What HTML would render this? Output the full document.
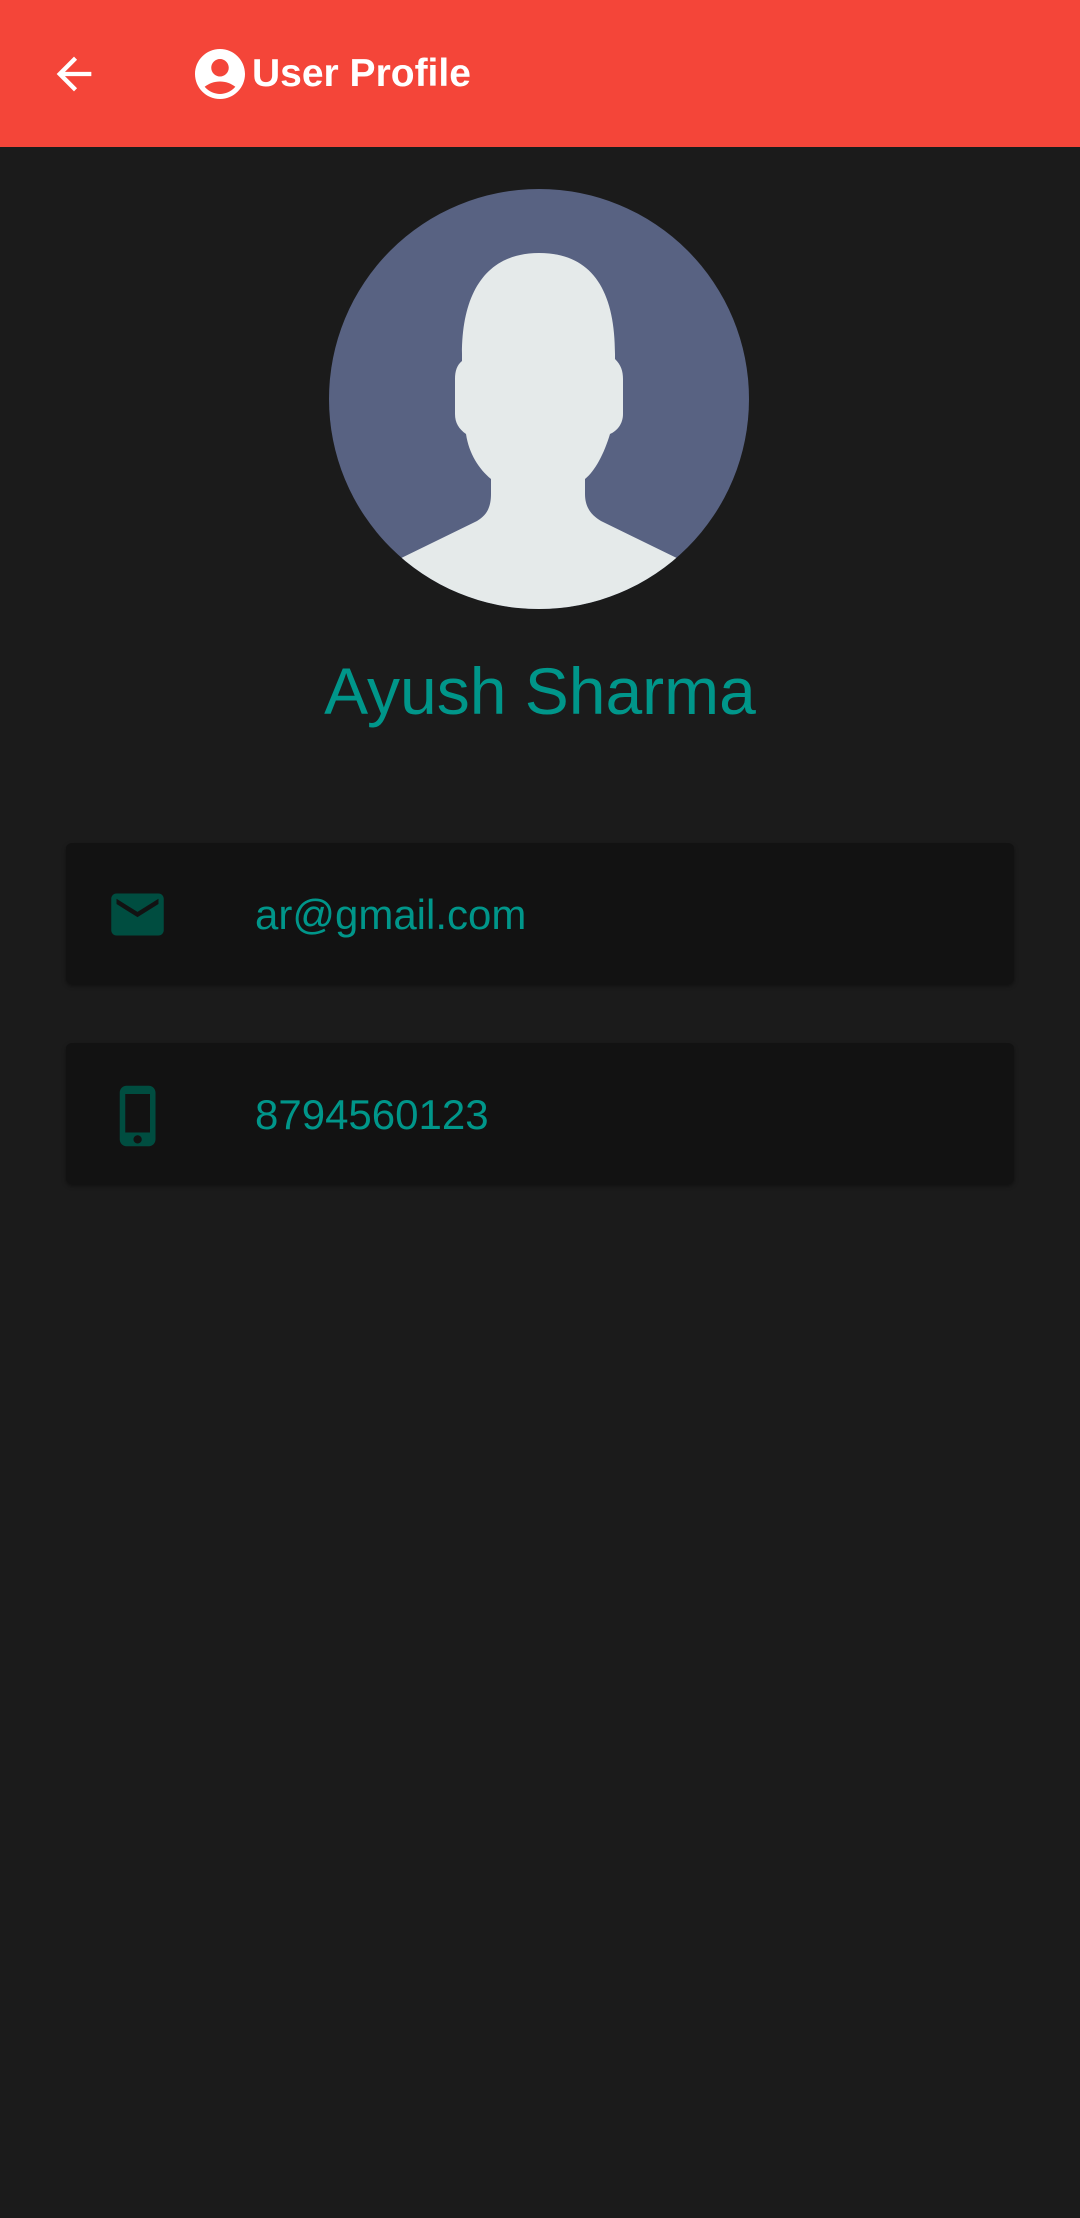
<!DOCTYPE html>
<html><head><meta charset="utf-8"><style>
*{margin:0;padding:0;box-sizing:border-box}
body{width:1080px;height:2218px;background:#1b1b1b;font-family:"Liberation Sans",Roboto,sans-serif;position:relative;overflow:hidden}
.hdr{position:absolute;left:0;top:0;width:1080px;height:147px;background:#f44539}
.title{position:absolute;left:252px;top:52px;font-size:39px;font-weight:bold;color:#fff;letter-spacing:0px}
.name{position:absolute;left:0;width:1080px;top:653px;text-align:center;font-size:66px;color:#00968a}
.card{position:absolute;left:66px;width:948px;height:141px;background:#121212;border-radius:6px;box-shadow:0 2px 4px rgba(0,0,0,.4)}
.card span{position:absolute;left:189px;top:48px;font-size:42px;color:#00968a}
.card svg{position:absolute}
</style></head><body>
<div class="hdr">
<svg style="position:absolute;left:48px;top:48px" width="52" height="52" viewBox="0 0 24 24"><path d="M20 11H7.83l5.59-5.59L12 4l-8 8 8 8 1.41-1.41L7.83 13H20v-2z" fill="#fff"/></svg>
<svg style="position:absolute;left:190px;top:44px" width="60" height="60" viewBox="0 0 24 24"><path fill="#fff" d="M12 2C6.48 2 2 6.48 2 12s4.48 10 10 10 10-4.48 10-10S17.52 2 12 2zm0 4c1.93 0 3.5 1.57 3.5 3.5S13.93 13 12 13s-3.5-1.57-3.5-3.5S10.07 6 12 6zm0 14c-2.03 0-4.43-.82-6.14-2.88C7.55 15.8 9.68 15 12 15s4.45.8 6.14 2.12C16.43 19.18 14.03 20 12 20z"/></svg>
<div class="title">User Profile</div>
</div>
<svg style="position:absolute;left:329px;top:189px" width="420" height="420" viewBox="0 0 420 420">
<defs><clipPath id="c"><circle cx="210" cy="210" r="210"/></clipPath></defs>
<circle cx="210" cy="210" r="210" fill="#586282"/>
<g clip-path="url(#c)" fill="#e5eaea">
<path d="M133 165 C133 100 160 64 210 64 C262 64 286 100 286 165 V170 C292 176 294 182 294 190 V225 C294 235 288 242 281 245 C275 265 266 282 256 290 V305 C256 318 262 326 272 332 L360 375 L360 440 L60 440 L60 375 L148 332 C158 326 162 318 162 305 V290 C150 280 140 265 137 245 C130 240 126 234 126 225 V190 C126 182 128 176 133 172 Z"/>
</g>
</svg>
<div class="name">Ayush Sharma</div>
<div class="card" style="top:843px">
<svg style="left:40px;top:40px" width="63" height="63" viewBox="0 0 24 24"><path fill="#004d40" d="M20 4H4c-1.1 0-2 .9-2 2v12c0 1.1.9 2 2 2h16c1.1 0 2-.9 2-2V6c0-1.1-.9-2-2-2zm0 4l-8 5-8-5V6l8 5 8-5v2z"/></svg>
<span>ar@gmail.com</span>
</div>
<div class="card" style="top:1043px">
<svg style="left:40px;top:40px" width="66" height="66" viewBox="0 0 24 24"><path fill="#004d40" d="M15.5 1h-8C6.12 1 5 2.12 5 3.5v17C5 21.88 6.12 23 7.5 23h8c1.38 0 2.5-1.12 2.5-2.5v-17C18 2.120 16.88 1 15.5 1zm-4 21c-.83 0-1.5-.67-1.5-1.5s.67-1.5 1.5-1.5 1.5.67 1.5 1.5-.67 1.5-1.5 1.5zm4.5-4H7V4h9v14z"/></svg>
<span>8794560123</span>
</div>
</body></html>
